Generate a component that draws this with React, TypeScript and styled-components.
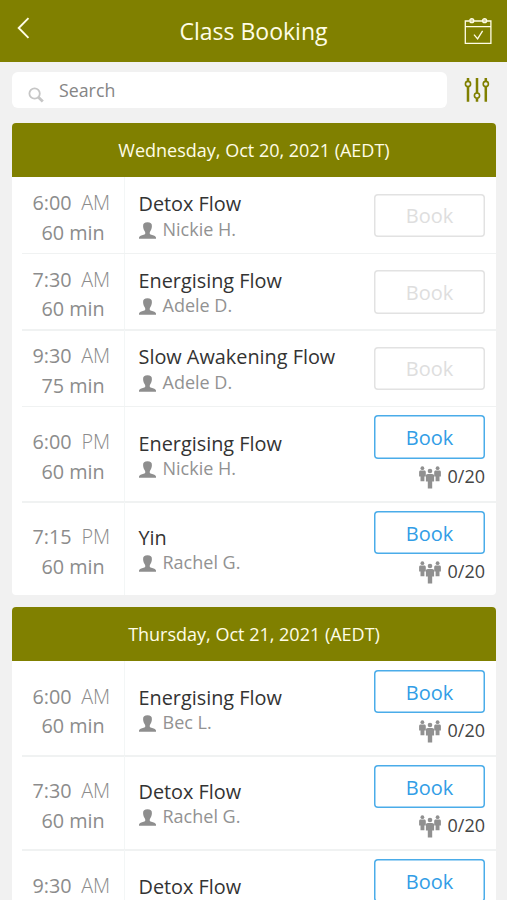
import React from "react";
import styled, { createGlobalStyle } from "styled-components";

const OLIVE = "#808000";

const GlobalStyle = createGlobalStyle`
  * { box-sizing: border-box; }
  body {
    margin: 0;
    background: #f1f1f1;
    font-family: "Open Sans", "Noto Sans", sans-serif;
    overflow: hidden;
  }
  svg { display: block; flex: none; }
`;

const Screen = styled.div`
  width: 507px;
  height: 900px;
  overflow: hidden;
  background: #f1f1f1;
`;

const TopBar = styled.header`
  display: grid;
  grid-template-columns: 48px 1fr 48px;
  align-items: center;
  height: 61.5px;
  background: ${OLIVE};
  color: #fffde6;
`;

const IconButton = styled.button`
  display: flex;
  align-items: center;
  padding: 0;
  border: 0;
  background: none;
  color: inherit;
`;

const BackButton = styled(IconButton)`
  padding: 0 0 5px 17px;
`;

const CalendarButton = styled(IconButton)`
  padding-left: 5px;
`;

const Title = styled.h1`
  margin: 0;
  padding-top: 1px;
  font-size: 23px;
  line-height: 32px;
  font-weight: 400;
  text-align: center;
`;

const SearchBar = styled.div`
  display: flex;
  align-items: center;
  gap: 17px;
  padding: 10.5px 17px 15px 12px;
`;

const SearchField = styled.div`
  display: flex;
  width: 435.5px;
  height: 36px;
  padding-left: 16px;
  gap: 15px;
  border-radius: 6px;
  background: #fff;
  color: #858585;
  font-size: 17.8px;
  line-height: 36px;

  svg { margin-top: 15px; }
`;

const FilterButton = styled(IconButton)`
  color: ${OLIVE};
`;

const DayCard = styled.section`
  width: 484px;
  margin: 0 0 12.5px 12px;
  border-radius: 4px;
  overflow: hidden;
  background: #fff;
`;

const DayHeader = styled.h2`
  height: 54px;
  margin: 0;
  background: ${OLIVE};
  color: #fffde6;
  font-size: 18px;
  line-height: 54px;
  font-weight: 400;
  text-align: center;
`;

const Row = styled.div<{ $height: number }>`
  display: grid;
  grid-template-columns: 103px 1fr 111px;
  height: ${(p) => p.$height}px;
  margin-left: 10px;
  padding-right: 11px;
  position: relative;

  &:not(:last-child)::after {
    content: "";
    position: absolute;
    left: 0;
    right: 0;
    bottom: -0.5px;
    height: 1.5px;
    background: #f0f2f2;
  }
`;

const TimeCell = styled.div<{ $top: number }>`
  padding-top: ${(p) => p.$top}px;
  border-right: 1.5px solid #f3f6f6;
  color: #8c8c8c;
  font-size: 19.8px;
  line-height: 29.5px;
`;

const StartTime = styled.div`
  display: flex;
  justify-content: space-between;
  padding: 0 14px 0 10.5px;
`;

const Meridiem = styled.span`
  font-weight: 300;
  letter-spacing: -0.1px;
`;

const Duration = styled.div`
  padding-left: 19.5px;
`;

const ClassCell = styled.div<{ $top: number }>`
  padding: ${(p) => p.$top}px 0 0 13.5px;
`;

const ClassName = styled.div`
  color: #333;
  font-size: 19.85px;
  line-height: 26px;
  white-space: nowrap;
`;

const Teacher = styled.div`
  display: flex;
  gap: 7px;
  margin-top: -0.6px;
  color: #929292;
  font-size: 18px;
  line-height: 25px;

  svg { margin-top: 5px; }
`;

const ActionCell = styled.div<{ $top: number }>`
  padding-top: ${(p) => p.$top}px;
`;

const BookButton = styled.button`
  display: block;
  width: 111px;
  height: 43.5px;
  padding: 2px 0 0;
  border: 0;
  border-radius: 4px;
  box-shadow: inset 0 0 0 1.5px #4aace9;
  background: #fff;
  color: #329de6;
  font: 400 20px/40px "Open Sans", "Noto Sans", sans-serif;

  &:disabled {
    box-shadow: inset 0 0 0 1.5px #e2e2e2;
    color: #dedede;
  }
`;

const Capacity = styled.div`
  display: flex;
  justify-content: flex-end;
  gap: 7px;
  padding-top: 4px;
  color: #444;
  font-size: 18px;
  line-height: 26px;

  svg { margin-top: 3px; }
`;

const BackIcon = () => (
  <svg width="13" height="22" viewBox="0 0 13 22" fill="none" stroke="currentColor" strokeWidth="1.9">
    <path d="M11.5 1.2 1.7 11l9.8 9.8" />
  </svg>
);

const CalendarIcon = () => (
  <svg width="28" height="28" viewBox="0 0 28 28" fill="none" stroke="currentColor" strokeWidth="1.3">
    <path d="M5.4 4H1.3v22.4h25.6V4h-4.1M9.4 4h9.2M1.3 9.6h25.6" />
    <circle cx="7.8" cy="3.7" r="2" fill="#d8d6a0" />
    <circle cx="20.6" cy="3.7" r="2" fill="#d8d6a0" />
    <path d="m10 17.6 3.6 4.2 5-8" />
  </svg>
);

const SearchIcon = () => (
  <svg width="16" height="16" viewBox="0 0 16 16" fill="none" stroke="#c6c6c6">
    <circle cx="6.6" cy="6.5" r="5.2" strokeWidth="1.8" />
    <path d="m10.4 10.3 4.4 4.2" strokeWidth="2.9" />
  </svg>
);

const FilterIcon = () => (
  <svg width="26" height="26" viewBox="0 0 26 26" fill="none" stroke="currentColor">
    <path d="M4 1v3.5M4 9.5v15.3M13 1v15M13 21.5v3.3M21.8 1v3.5M21.8 9.5v15.3" strokeWidth="2.5" />
    <g strokeWidth="1.6">
      <circle cx="4" cy="7" r="2.6" />
      <circle cx="13" cy="18.6" r="2.6" />
      <circle cx="21.8" cy="7" r="2.6" />
    </g>
  </svg>
);

const PersonIcon = () => (
  <svg width="17" height="17" viewBox="0 0 17 17" fill="#8e8e8e">
    <path d="M8.5.2c3 0 4.5 1.1 4.4 3.8 0 1.9-.5 3.5-1.3 4.7-.6.9-.9 1.5-.9 2.200 0 1 .6 1.500 1.700 1.900 2.200.8 4.200 1.200 4.600 2.600v1.300H0v-1.300c.4-1.400 2.400-1.800 4.600-2.600 1.100-.4 1.700-.9 1.700-1.900 0-.7-.3-1.300-.9-2.200C4.600 7.500 4.100 5.900 4.100 4 4 1.300 5.500.2 8.500.2Z" />
  </svg>
);

const GroupIcon = () => (
  <svg width="22" height="23" viewBox="0 0 22 23" fill="#909090">
    <circle cx="3.4" cy="2.2" r="1.9" />
    <path d="M1.6 4.5h3.6c1.1 0 1.6.7 1.6 1.6v4.4H5.4v4.7H1.5v-4.7H.1V6.1c0-.9.5-1.6 1.5-1.6Z" />
    <circle cx="18.6" cy="2.2" r="1.9" />
    <path d="M16.8 4.5h3.6c1 0 1.5.7 1.5 1.6v4.4h-1.4v4.7h-3.9v-4.7h-1.4V6.1c0-.9.6-1.6 1.6-1.6Z" />
    <circle cx="11" cy="5" r="2.3" />
    <path d="M8.9 8h4.2c1.3 0 2 .7 2 1.9v5.5h-1.9v7H8.8v-7H6.9V9.9C6.9 8.7 7.6 8 8.9 8Z" />
  </svg>
);

type Session = {
  time: string;
  half: "AM" | "PM";
  minutes: number;
  name: string;
  teacher: string;
  open: boolean;
  height: number;
  timeTop: number;
  nameTop: number;
};

const past = { open: false, height: 76.5, timeTop: 11.3, nameTop: 14.3 };
const tall = { open: true, height: 95.8, timeTop: 20.5, nameTop: 24 };
const snug = { open: true, height: 92.7, timeTop: 20, nameTop: 22.6 };

const days: { date: string; sessions: Session[] }[] = [
  {
    date: "Wednesday, Oct 20, 2021 (AEDT)",
    sessions: [
      { time: "6:00", half: "AM", minutes: 60, name: "Detox Flow", teacher: "Nickie H.", ...past },
      { time: "7:30", half: "AM", minutes: 60, name: "Energising Flow", teacher: "Adele D.", ...past },
      { time: "9:30", half: "AM", minutes: 75, name: "Slow Awakening Flow", teacher: "Adele D.", ...past },
      { time: "6:00", half: "PM", minutes: 60, name: "Energising Flow", teacher: "Nickie H.", ...tall },
      { time: "7:15", half: "PM", minutes: 60, name: "Yin", teacher: "Rachel G.", ...snug },
    ],
  },
  {
    date: "Thursday, Oct 21, 2021 (AEDT)",
    sessions: [
      { time: "6:00", half: "AM", minutes: 60, name: "Energising Flow", teacher: "Bec L.", ...tall, height: 95, nameTop: 23.3 },
      { time: "7:30", half: "AM", minutes: 60, name: "Detox Flow", teacher: "Rachel G.", ...snug, height: 94 },
      { time: "9:30", half: "AM", minutes: 60, name: "Detox Flow", teacher: "Rachel G.", ...tall },
    ],
  },
];

const SessionRow = ({ session: s }: { session: Session }) => (
  <Row $height={s.height}>
    <TimeCell $top={s.timeTop}>
      <StartTime>
        <span>{s.time}</span>
        <Meridiem>{s.half}</Meridiem>
      </StartTime>
      <Duration>{s.minutes} min</Duration>
    </TimeCell>
    <ClassCell $top={s.nameTop}>
      <ClassName>{s.name}</ClassName>
      <Teacher>
        <PersonIcon />
        {s.teacher}
      </Teacher>
    </ClassCell>
    <ActionCell $top={s.open ? 8.5 : 16.5}>
      <BookButton disabled={!s.open}>Book</BookButton>
      {s.open && (
        <Capacity>
          <GroupIcon />
          0/20
        </Capacity>
      )}
    </ActionCell>
  </Row>
);

export default function App() {
  return (
    <>
      <GlobalStyle />
      <Screen>
        <TopBar>
          <BackButton aria-label="Back"><BackIcon /></BackButton>
          <Title>Class Booking</Title>
          <CalendarButton aria-label="My bookings"><CalendarIcon /></CalendarButton>
        </TopBar>
        <SearchBar>
          <SearchField>
            <SearchIcon />
            <span>Search</span>
          </SearchField>
          <FilterButton aria-label="Filters"><FilterIcon /></FilterButton>
        </SearchBar>
        {days.map((day) => (
          <DayCard key={day.date}>
            <DayHeader>{day.date}</DayHeader>
            {day.sessions.map((session) => (
              <SessionRow key={session.time + session.half} session={session} />
            ))}
          </DayCard>
        ))}
      </Screen>
    </>
  );
}
